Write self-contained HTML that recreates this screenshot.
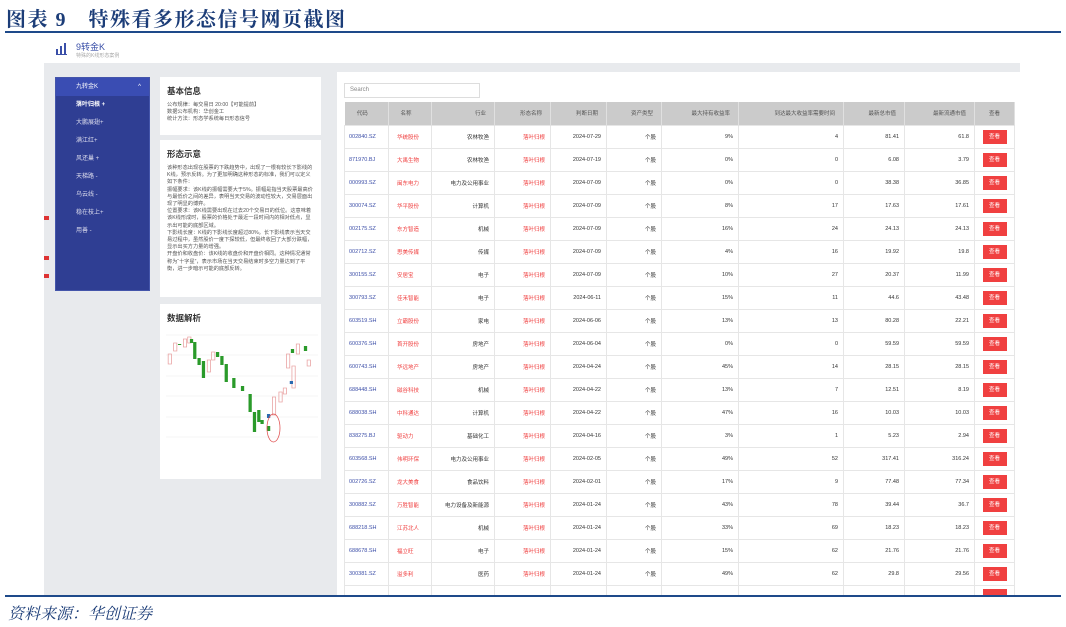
<!DOCTYPE html>
<html><head><meta charset="utf-8"><style>
*{margin:0;padding:0;box-sizing:border-box}
body{width:1066px;height:627px;background:#fff;position:relative;overflow:hidden;font-family:"Liberation Sans","Noto Sans CJK SC",sans-serif;color:#333}
.abs{position:absolute}
.title{left:6px;top:3px;font-size:20px;font-weight:bold;color:#1c3d78;font-family:"Liberation Serif","Noto Serif CJK SC",serif;letter-spacing:1.5px}
.line{left:5px;width:1056px;height:2px;background:#1e4a8a}
.gray{left:44px;top:63px;width:976px;height:532px;background:#e8eaed}
.side{left:55px;top:77px;width:95px;height:214px;background:#2f3e93;border:1px solid #4455aa}
.side div{height:18px;line-height:18px;font-size:6px;color:#dde;padding-left:20px}
.card{background:#fff;left:160px;width:161px}
.card h3{font-size:8.5px;color:#333;margin:8px 0 0 7px}
.card p{font-size:5.2px;line-height:7.2px;color:#555;margin:5px 7px 0 7px}
.tp{left:337px;top:72px;width:683px;height:523px;background:#fff}
table{position:absolute;left:344px;top:102px;border-collapse:collapse;font-size:5.5px;table-layout:fixed}
th{background:#cbcbcb;height:23px;font-weight:normal;color:#555;border-right:1px solid #e0e0e0;text-align:right;padding-right:8px}
td{height:23px;border:1px solid #e6e6e6;text-align:right;padding-right:5px;color:#333}
td.c{color:#3d4fa8;text-align:left;padding-left:4px}
td.n{color:#f04040;text-align:left;padding-left:8px}
td.f{color:#f04040}
.b{display:inline-block;width:24px;height:14px;background:#f04040;color:#fff;text-align:center;line-height:14px;font-size:5.5px}
</style></head><body>
<div class="abs title">图表 9　特殊看多形态信号网页截图</div>
<div class="abs line" style="top:31px"></div>
<div class="abs" style="left:56px;top:42px;width:10px;height:12px">
<svg width="11" height="12"><rect x="0" y="6" width="2" height="6" fill="#3a4fa8"/><rect x="4" y="3" width="2" height="9" fill="#3a4fa8"/><rect x="8" y="0" width="2" height="12" fill="#3a4fa8"/><rect x="0" y="11" width="11" height="1" fill="#3a4fa8"/></svg></div>
<div class="abs" style="left:76px;top:40px;font-size:9px;color:#3a4fa8">9转金K</div>
<div class="abs" style="left:76px;top:52px;font-size:5px;color:#aaa">特殊的K线形态案例</div>
<div class="abs gray"></div>
<div class="abs side">
<div style="background:#3a4db3;color:#fff">九转金K<span style="float:right;margin-right:8px">^</span></div>
<div style="color:#fff;font-weight:bold">落叶归根 +</div><div>大鹏展翅+</div><div>满江红+</div><div>风还巢 +</div><div>天梯路 -</div><div>乌云线 -</div><div>稳在枝上+</div><div>用善 -</div></div>
<div class="abs" style="left:44px;top:216px;width:5px;height:4px;background:#d33"></div>
<div class="abs" style="left:44px;top:256px;width:5px;height:4px;background:#d33"></div>
<div class="abs" style="left:44px;top:274px;width:5px;height:4px;background:#d33"></div>
<div class="abs card" style="top:77px;height:58px"><h3>基本信息</h3><p>公布规律：每交易日 20:00【可能提前】<br>数据公布机构：华创金工<br>统计方法：形态学系统每日形态信号</p></div>
<div class="abs card" style="top:140px;height:157px"><h3>形态示意</h3><p>该种形态出现在股票的下跌趋势中，出现了一根有较长下影线的K线，预示反转。为了更加明确这种形态的标准，我们可以定义如下条件：<br>振幅要求：该K线的振幅需要大于5%。振幅是指当天股票最高价与最低价之间的差异，表明当天交易的波动性较大，交易层面出现了明显的博弈。<br>位置要求：该K线需要出现在过去20个交易日的低位。这意味着该K线形成时，股票的价格处于最近一段时间内的相对低点，显示出可能的底部区域。<br>下影线长度：K线的下影线长度超过80%。长下影线表示当天交易过程中，虽然股价一度下探较低，但最终收回了大部分跌幅，显示出买方力量的增强。<br>开盘价和收盘价：该K线的收盘价和开盘价相同。这种情况通常称为“十字星”，表示市场在当天交易结束时多空力量达到了平衡，进一步暗示可能的底部反转。</p></div>
<div class="abs card" style="top:304px;height:175px"><h3>数据解析</h3>
<svg class="abs" style="left:6px;top:26px" width="152" height="120" viewBox="0 0 140 120" preserveAspectRatio="none">
<g stroke="#eee" stroke-width="0.5"><line x1="0" y1="5" x2="140" y2="5"/><line x1="0" y1="25" x2="140" y2="25"/><line x1="0" y1="46" x2="140" y2="46"/><line x1="0" y1="66" x2="140" y2="66"/><line x1="0" y1="87" x2="140" y2="87"/><line x1="0" y1="107" x2="140" y2="107"/></g>
<g fill="none" stroke="#e8a0a0" stroke-width="0.7"><rect x="2" y="24" width="3" height="10"/><rect x="7" y="13" width="3" height="8"/><rect x="16" y="9" width="3" height="8"/><rect x="20" y="7" width="3" height="6"/><rect x="38" y="30" width="3" height="12"/><rect x="42" y="22" width="3" height="8"/><rect x="111" y="24" width="3" height="14"/><rect x="130" y="30" width="3" height="6"/><rect x="116" y="36" width="3" height="22"/><rect x="120" y="14" width="3" height="10"/><rect x="98" y="67" width="3" height="18"/><rect x="104" y="62" width="3" height="10"/><rect x="108" y="58" width="3" height="6"/></g>
<g fill="#2a9a2a"><rect x="11" y="14" width="3" height="1"/><rect x="22" y="9" width="3" height="4"/><rect x="25" y="12" width="3" height="17"/><rect x="29" y="28" width="3" height="7"/><rect x="33" y="31" width="3" height="17"/><rect x="46" y="22" width="3" height="5"/><rect x="50" y="26" width="3" height="9"/><rect x="54" y="34" width="3" height="18"/><rect x="61" y="48" width="3" height="10"/><rect x="69" y="56" width="3" height="5"/><rect x="76" y="64" width="3" height="18"/><rect x="80" y="82" width="3" height="20"/><rect x="84" y="80" width="3" height="12"/><rect x="87" y="90" width="3" height="4"/><rect x="93" y="96" width="3" height="5"/><rect x="115" y="19" width="3" height="4"/><rect x="127" y="16" width="3" height="5"/></g>
<rect x="93" y="84" width="3" height="4" fill="#2a6ab0"/><rect x="114" y="51" width="3" height="3" fill="#2a6ab0"/>
<ellipse cx="99" cy="98" rx="6" ry="14" fill="none" stroke="#e05050" stroke-width="0.7"/>
</svg></div>
<div class="abs tp"></div>
<div class="abs" style="left:344px;top:83px;width:136px;height:15px;border:1px solid #ddd;font-size:6px;color:#888;padding:3px 5px">Search</div>
<table>
<colgroup><col width="44"><col width="43"><col width="63"><col width="56"><col width="56"><col width="55"><col width="77"><col width="105"><col width="61"><col width="70"><col width="40"></colgroup>
<tr><th style="text-align:center">代码</th><th style="text-align:center">名称</th><th>行业</th><th>形态名称</th><th>判断日期</th><th>资产类型</th><th>最大持有收益率</th><th>到达最大收益率需要时间</th><th>最新总市值</th><th>最新流通市值</th><th style="text-align:center;padding:0">查看</th></tr>
<tr><td class="c">002840.SZ</td><td class="n">华统股份</td><td>农林牧渔</td><td class="f">落叶归根</td><td>2024-07-29</td><td>个股</td><td>9%</td><td>4</td><td>81.41</td><td>61.8</td><td style="text-align:center;padding:0"><span class="b">查看</span></td></tr>
<tr><td class="c">871970.BJ</td><td class="n">大禹生物</td><td>农林牧渔</td><td class="f">落叶归根</td><td>2024-07-19</td><td>个股</td><td>0%</td><td>0</td><td>6.08</td><td>3.79</td><td style="text-align:center;padding:0"><span class="b">查看</span></td></tr>
<tr><td class="c">000993.SZ</td><td class="n">闽东电力</td><td>电力及公用事业</td><td class="f">落叶归根</td><td>2024-07-09</td><td>个股</td><td>0%</td><td>0</td><td>38.38</td><td>36.85</td><td style="text-align:center;padding:0"><span class="b">查看</span></td></tr>
<tr><td class="c">300074.SZ</td><td class="n">华平股份</td><td>计算机</td><td class="f">落叶归根</td><td>2024-07-09</td><td>个股</td><td>8%</td><td>17</td><td>17.63</td><td>17.61</td><td style="text-align:center;padding:0"><span class="b">查看</span></td></tr>
<tr><td class="c">002175.SZ</td><td class="n">东方智造</td><td>机械</td><td class="f">落叶归根</td><td>2024-07-09</td><td>个股</td><td>16%</td><td>24</td><td>24.13</td><td>24.13</td><td style="text-align:center;padding:0"><span class="b">查看</span></td></tr>
<tr><td class="c">002712.SZ</td><td class="n">思美传媒</td><td>传媒</td><td class="f">落叶归根</td><td>2024-07-09</td><td>个股</td><td>4%</td><td>16</td><td>19.92</td><td>19.8</td><td style="text-align:center;padding:0"><span class="b">查看</span></td></tr>
<tr><td class="c">300155.SZ</td><td class="n">安居宝</td><td>电子</td><td class="f">落叶归根</td><td>2024-07-09</td><td>个股</td><td>10%</td><td>27</td><td>20.37</td><td>11.99</td><td style="text-align:center;padding:0"><span class="b">查看</span></td></tr>
<tr><td class="c">300793.SZ</td><td class="n">佳禾智能</td><td>电子</td><td class="f">落叶归根</td><td>2024-06-11</td><td>个股</td><td>15%</td><td>11</td><td>44.6</td><td>43.48</td><td style="text-align:center;padding:0"><span class="b">查看</span></td></tr>
<tr><td class="c">603519.SH</td><td class="n">立霸股份</td><td>家电</td><td class="f">落叶归根</td><td>2024-06-06</td><td>个股</td><td>13%</td><td>13</td><td>80.28</td><td>22.21</td><td style="text-align:center;padding:0"><span class="b">查看</span></td></tr>
<tr><td class="c">600376.SH</td><td class="n">首开股份</td><td>房地产</td><td class="f">落叶归根</td><td>2024-06-04</td><td>个股</td><td>0%</td><td>0</td><td>59.59</td><td>59.59</td><td style="text-align:center;padding:0"><span class="b">查看</span></td></tr>
<tr><td class="c">600743.SH</td><td class="n">华远地产</td><td>房地产</td><td class="f">落叶归根</td><td>2024-04-24</td><td>个股</td><td>45%</td><td>14</td><td>28.15</td><td>28.15</td><td style="text-align:center;padding:0"><span class="b">查看</span></td></tr>
<tr><td class="c">688448.SH</td><td class="n">磁谷科技</td><td>机械</td><td class="f">落叶归根</td><td>2024-04-22</td><td>个股</td><td>13%</td><td>7</td><td>12.51</td><td>8.19</td><td style="text-align:center;padding:0"><span class="b">查看</span></td></tr>
<tr><td class="c">688038.SH</td><td class="n">中科通达</td><td>计算机</td><td class="f">落叶归根</td><td>2024-04-22</td><td>个股</td><td>47%</td><td>16</td><td>10.03</td><td>10.03</td><td style="text-align:center;padding:0"><span class="b">查看</span></td></tr>
<tr><td class="c">838275.BJ</td><td class="n">驱动力</td><td>基础化工</td><td class="f">落叶归根</td><td>2024-04-16</td><td>个股</td><td>3%</td><td>1</td><td>5.23</td><td>2.94</td><td style="text-align:center;padding:0"><span class="b">查看</span></td></tr>
<tr><td class="c">603568.SH</td><td class="n">伟明环保</td><td>电力及公用事业</td><td class="f">落叶归根</td><td>2024-02-05</td><td>个股</td><td>49%</td><td>52</td><td>317.41</td><td>316.24</td><td style="text-align:center;padding:0"><span class="b">查看</span></td></tr>
<tr><td class="c">002726.SZ</td><td class="n">龙大美食</td><td>食品饮料</td><td class="f">落叶归根</td><td>2024-02-01</td><td>个股</td><td>17%</td><td>9</td><td>77.48</td><td>77.34</td><td style="text-align:center;padding:0"><span class="b">查看</span></td></tr>
<tr><td class="c">300882.SZ</td><td class="n">万胜智能</td><td>电力设备及新能源</td><td class="f">落叶归根</td><td>2024-01-24</td><td>个股</td><td>43%</td><td>78</td><td>39.44</td><td>36.7</td><td style="text-align:center;padding:0"><span class="b">查看</span></td></tr>
<tr><td class="c">688218.SH</td><td class="n">江苏北人</td><td>机械</td><td class="f">落叶归根</td><td>2024-01-24</td><td>个股</td><td>33%</td><td>69</td><td>18.23</td><td>18.23</td><td style="text-align:center;padding:0"><span class="b">查看</span></td></tr>
<tr><td class="c">688678.SH</td><td class="n">福立旺</td><td>电子</td><td class="f">落叶归根</td><td>2024-01-24</td><td>个股</td><td>15%</td><td>62</td><td>21.76</td><td>21.76</td><td style="text-align:center;padding:0"><span class="b">查看</span></td></tr>
<tr><td class="c">300381.SZ</td><td class="n">溢多利</td><td>医药</td><td class="f">落叶归根</td><td>2024-01-24</td><td>个股</td><td>49%</td><td>62</td><td>29.8</td><td>29.56</td><td style="text-align:center;padding:0"><span class="b">查看</span></td></tr>
<tr><td></td><td></td><td></td><td></td><td></td><td></td><td></td><td></td><td></td><td></td><td style="text-align:center;padding:0"><span class="b"></span></td></tr>
</table>
<div class="abs" style="left:0;top:595px;width:1066px;height:32px;background:#fff"></div>
<div class="abs line" style="top:595px"></div>
<div class="abs" style="left:8px;top:601px;font-size:16px;color:#1c3d78;font-style:italic;font-family:'Liberation Serif','Noto Serif CJK SC',serif">资料来源：华创证券</div>
</body></html>
